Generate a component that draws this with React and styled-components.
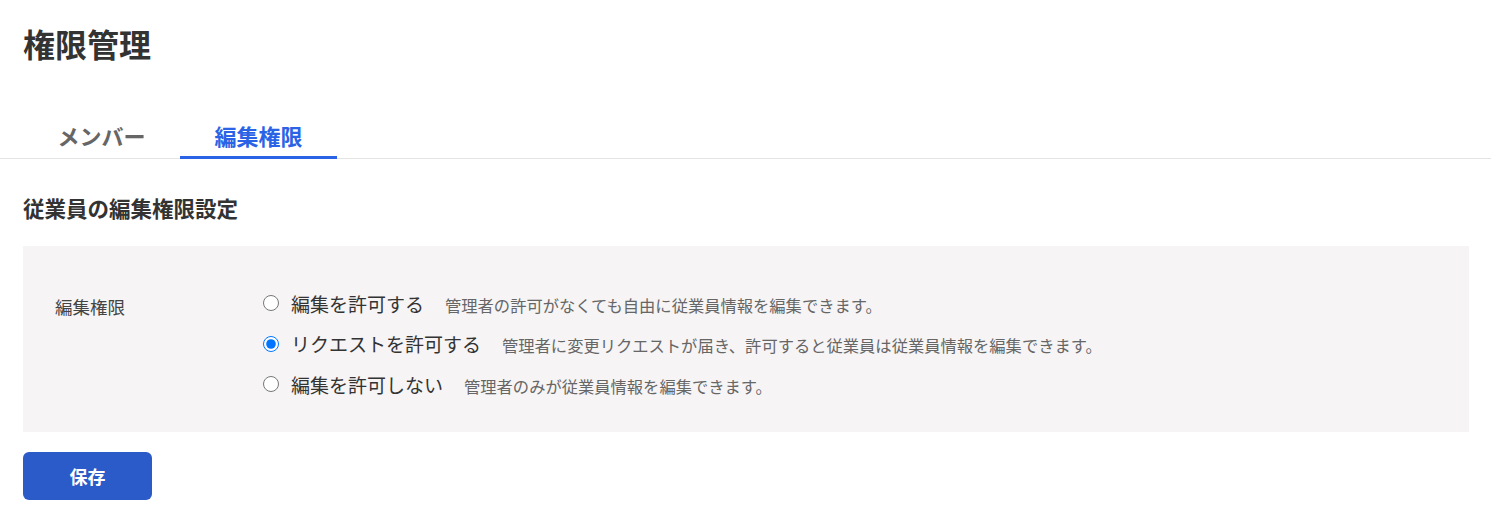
import React, { useState } from 'react'
import styled, { createGlobalStyle } from 'styled-components'

const GlobalStyle = createGlobalStyle`
  body {
    margin: 0;
    background: #fff;
    font-family: "Noto Sans CJK JP", "Noto Sans", sans-serif;
    color: #333;
  }
`

const Page = styled.main`
  padding-top: 19px;
`

const Title = styled.h1`
  margin: 0;
  padding: 0 22px 0 23px;
  font-size: 32px;
  line-height: 48px;
  font-weight: 700;
  color: #333;
`

const TabList = styled.nav`
  display: flex;
  margin-top: 44px;
  padding: 0 23px;
  border-bottom: 1px solid #e4e4e4;
`

const Tab = styled.button`
  width: 157px;
  padding: 8px 0 4px;
  margin-bottom: -1px;
  border: none;
  border-bottom: 3px solid ${props => (props.$active ? '#2b63e6' : 'transparent')};
  background: none;
  font-family: inherit;
  font-size: 22px;
  line-height: 33px;
  font-weight: 700;
  color: ${props => (props.$active ? '#2b63e6' : '#666')};
  cursor: pointer;
`

const Content = styled.section`
  padding: 0 22px 0 23px;
`

const SectionTitle = styled.h2`
  margin: 33px 0 0;
  font-size: 21.5px;
  line-height: 32px;
  font-weight: 700;
  color: #333;
`

const SettingBox = styled.div`
  display: flex;
  margin-top: 22px;
  padding: 37px 32px 27px;
  background: #f6f4f4;
`

const FieldLabel = styled.div`
  width: 208px;
  margin-top: 10px;
  font-size: 17.5px;
  line-height: 27px;
  color: #444;
`

const Options = styled.div`
  display: flex;
  flex-direction: column;
`

const OptionRow = styled.label`
  display: flex;
  align-items: center;
  gap: 12px;
  height: 40.5px;
  cursor: pointer;
`

const Radio = styled.input`
  width: 16px;
  height: 16px;
  margin: 0;
  accent-color: #0075ff;
`

const OptionText = styled.span`
  display: flex;
  align-items: baseline;
`

const OptionName = styled.span`
  font-size: 19px;
  color: #333;
`

const OptionDesc = styled.span`
  margin-left: 21px;
  font-size: 16.3px;
  color: #666;
`

const SaveButton = styled.button`
  width: 129px;
  height: 48px;
  margin-top: 20px;
  border: none;
  border-radius: 6px;
  background: #2a5bc8;
  color: #fff;
  font-family: inherit;
  font-size: 18px;
  font-weight: 700;
  cursor: pointer;
`

const options = [
  { value: 'allow', name: '編集を許可する', desc: '管理者の許可がなくても自由に従業員情報を編集できます。' },
  { value: 'request', name: 'リクエストを許可する', desc: '管理者に変更リクエストが届き、許可すると従業員は従業員情報を編集できます。' },
  { value: 'deny', name: '編集を許可しない', desc: '管理者のみが従業員情報を編集できます。' }
]

function App () {
  const [tab, setTab] = useState('edit')
  const [mode, setMode] = useState('request')

  return (
    <>
      <GlobalStyle />
      <Page>
        <Title>権限管理</Title>

        <TabList>
          <Tab $active={tab === 'members'} onClick={() => setTab('members')}>メンバー</Tab>
          <Tab $active={tab === 'edit'} onClick={() => setTab('edit')}>編集権限</Tab>
        </TabList>

        <Content>
          <SectionTitle>従業員の編集権限設定</SectionTitle>

          <SettingBox>
            <FieldLabel>編集権限</FieldLabel>
            <Options>
              {options.map(option => (
                <OptionRow key={option.value}>
                  <Radio
                    type="radio"
                    name="edit-permission"
                    value={option.value}
                    checked={mode === option.value}
                    onChange={() => setMode(option.value)}
                  />
                  <OptionText>
                    <OptionName>{option.name}</OptionName>
                    <OptionDesc>{option.desc}</OptionDesc>
                  </OptionText>
                </OptionRow>
              ))}
            </Options>
          </SettingBox>

          <SaveButton>保存</SaveButton>
        </Content>
      </Page>
    </>
  )
}

export default App
